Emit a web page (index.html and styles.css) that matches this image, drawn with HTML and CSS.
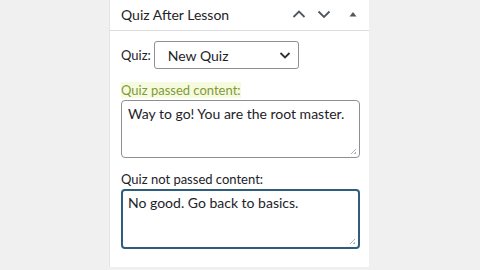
FILE: index.html
```html
<!DOCTYPE html>
<html lang="en">
<head>
  <meta charset="UTF-8" />
  <title>Quiz After Lesson</title>
  <link rel="stylesheet" href="styles.css">
</head>
<body>

  <div class="panel">
    <div class="panel-header">
      <h2 class="panel-title">Quiz After Lesson</h2>
      <div class="panel-actions">
        <svg class="chev" width="16" height="16" viewBox="0 0 16 16"><path d="M2.5 11 L8 5.5 L13.5 11" fill="none" stroke="#50575e" stroke-width="1.8"/></svg>
        <svg class="chev" width="16" height="16" viewBox="0 0 16 16"><path d="M2.5 5.5 L8 11 L13.5 5.5" fill="none" stroke="#50575e" stroke-width="1.8"/></svg>
        <svg class="tri" width="12" height="12" viewBox="0 0 12 12"><path d="M2.5 8.5 L6 4 L9.5 8.5 Z" fill="#50575e"/></svg>
      </div>
    </div>

    <div class="panel-body">
      <div class="row-quiz">
        <label>Quiz:</label>
        <div class="select">
          <span>New Quiz</span>
          <svg width="14" height="14" viewBox="0 0 14 14"><path d="M2.5 5 L7 9.5 L11.5 5" fill="none" stroke="#2c3338" stroke-width="1.8"/></svg>
        </div>
      </div>

      <div class="field">
        <div class="label label-hl"><span>Quiz passed content:</span></div>
        <div class="textarea">Way to go! You are the root master.<i class="grip"></i></div>
      </div>

      <div class="field">
        <div class="label">Quiz not passed content:</div>
        <div class="textarea focus">No good. Go back to basics.<i class="grip"></i></div>
      </div>
    </div>
  </div>

</body>
</html>
```

FILE: styles.css
```css
body {
  margin: 0;
  background-color: #f0f0f1;
  font-family: Lato, "Open Sans", sans-serif;
  color: #1d2327;
  font-size: 13px;
}

.panel {
  margin-left: 109px;
  width: 260px;
  height: 267px;
  background-color: #fff;
  border-left: 1px solid #e4e4e6;
  box-sizing: border-box;
}

.panel-header {
  display: flex;
  align-items: center;
  justify-content: space-between;
  height: 31px;
  padding: 0 10px 2px 11px;
  border-bottom: 1px solid #dcdcde;
  box-sizing: border-box;
}

.panel-title {
  margin: 0;
  font-size: 14px;
  font-weight: normal;
  color: #1d2327;
}

.panel-actions {
  display: flex;
  align-items: center;
  gap: 9px;
}

.panel-actions .tri {
  margin-left: 6px;
}

.panel-body {
  padding: 10px 9px 0 11px;
}

.row-quiz {
  display: flex;
  align-items: center;
  gap: 3px;
}

.select {
  display: flex;
  align-items: center;
  justify-content: space-between;
  width: 145px;
  height: 28px;
  padding: 0 6px 0 13px;
  border: 1px solid #8c8f94;
  border-radius: 3px;
  box-sizing: border-box;
  font-size: 14px;
}

.field {
  margin-top: 12px;
}

.label {
  line-height: 18px;
}

.label-hl span {
  background-color: #f6fadf;
  color: #7f9a36;
}

.textarea {
  position: relative;
  height: 58px;
  margin-top: 1px;
  padding: 4px 6px;
  border: 1px solid #8c8f94;
  border-radius: 4px;
  box-sizing: border-box;
  font-size: 14px;
  line-height: 18px;
}

.textarea.focus {
  border: 2px solid #2f5e7c;
  padding: 3px 5px;
  height: 60px;
}

.grip {
  position: absolute;
  right: 3px;
  bottom: 3px;
  width: 6px;
  height: 6px;
  background: linear-gradient(135deg, transparent 55%, #b0b3b8 55%, #b0b3b8 65%, transparent 65%, transparent 80%, #b0b3b8 80%);
}
```
